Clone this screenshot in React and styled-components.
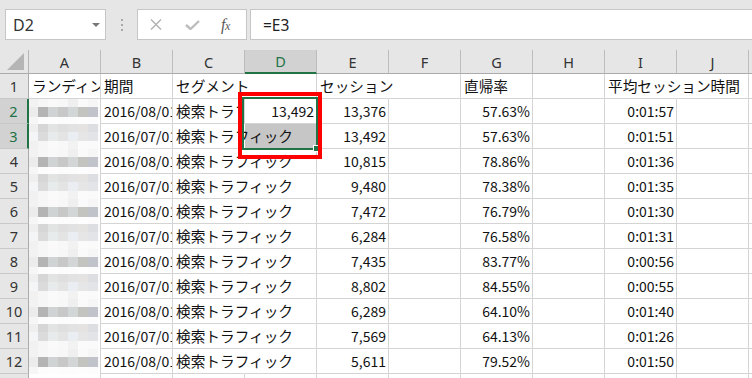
import React from 'react';
import styled, { createGlobalStyle } from 'styled-components';

const GlobalStyle = createGlobalStyle`
  html, body { margin: 0; padding: 0; background: #ffffff; }
  body { overflow: hidden; }
`;

const UI = '"Noto Sans", "Open Sans", "Liberation Sans", sans-serif';
const JP = '"Noto Sans CJK JP", "Noto Sans", sans-serif';
const GREEN = '#217346';
const COLS = '29px repeat(11, 72px)';

const Window = styled.div`
  width: 752px;
  height: 378px;
  overflow: hidden;
  background: #ffffff;
  font-family: ${JP};
`;

const FormulaBar = styled.div`
  height: 50px;
  box-sizing: border-box;
  background: #e6e6e6;
  display: flex;
  align-items: flex-start;
  padding: 9px 0 0 5px;
`;

const NameBox = styled.div`
  width: 101px;
  height: 31px;
  box-sizing: border-box;
  background: #ffffff;
  border: 1px solid #c6c6c6;
  display: flex;
  align-items: center;
  justify-content: space-between;
  padding: 0 5px 0 7px;
  font-family: ${UI};
  font-size: 16px;
  color: #333333;
`;

const Caret = styled.span`
  width: 0;
  height: 0;
  border-left: 4px solid transparent;
  border-right: 4px solid transparent;
  border-top: 4px solid #787878;
`;

const Grip = styled.div`
  display: flex;
  flex-direction: column;
  gap: 3px;
  margin: 10px 14px 0 15px;
`;

const Dot = styled.span`
  width: 2px;
  height: 2px;
  background: #a8a8a8;
`;

const FxBox = styled.div`
  width: 110px;
  height: 31px;
  box-sizing: border-box;
  background: #ffffff;
  border: 1px solid #c6c6c6;
  display: flex;
  align-items: center;
  padding-left: 12px;
`;

const IconSlot = styled.span`
  display: flex;
  align-items: center;
  margin-right: ${p => p.$gap}px;
`;

const Fx = styled.span`
  font-family: "Liberation Serif", "DejaVu Serif", serif;
  font-style: italic;
  font-size: 16px;
  color: #5a5a5a;
  letter-spacing: -0.5px;
  small { font-size: 12px; }
`;

const FormulaInput = styled.div`
  flex: 1;
  height: 31px;
  box-sizing: border-box;
  margin-left: 3px;
  background: #ffffff;
  border: 1px solid #c6c6c6;
  border-right: none;
  display: flex;
  align-items: center;
  padding-left: 12px;
  font-family: ${UI};
  font-size: 15.5px;
  color: #222222;
`;

const Sheet = styled.div`
  position: relative;
`;

const Row = styled.div`
  display: grid;
  grid-template-columns: ${COLS};
  height: ${p => (p.$header ? 24 : 25)}px;
`;

const Corner = styled.div`
  box-sizing: border-box;
  background: #e6e6e6;
  border-right: 1px solid #b4b4b4;
  border-bottom: 1px solid #ababab;
  display: flex;
  justify-content: flex-end;
  align-items: flex-end;
  padding: 0 4px 3px 0;
`;

const CornerMark = styled.span`
  width: 0;
  height: 0;
  border-left: 17px solid transparent;
  border-bottom: 17px solid #b5b5b5;
`;

const ColHead = styled.div`
  box-sizing: border-box;
  background: ${p => (p.$sel ? '#d2d2d2' : '#e6e6e6')};
  border-right: 1px solid #bcbcbc;
  border-bottom: ${p => (p.$sel ? `2px solid ${GREEN}` : '1px solid #ababab')};
  display: flex;
  align-items: center;
  justify-content: center;
  font-family: ${UI};
  font-size: 14.5px;
  color: ${p => (p.$sel ? GREEN : '#333333')};
`;

const RowHead = styled.div`
  box-sizing: border-box;
  background: ${p => (p.$sel ? '#d2d2d2' : '#e6e6e6')};
  border-right: ${p => (p.$sel ? `2px solid ${GREEN}` : '1px solid #ababab')};
  border-bottom: 1px solid #c8c8c8;
  display: flex;
  align-items: center;
  justify-content: center;
  font-family: ${UI};
  font-size: 14.5px;
  color: ${p => (p.$sel ? GREEN : '#333333')};
`;

const Cell = styled.div`
  box-sizing: border-box;
  min-width: 0;
  height: 25px;
  border-right: 1px solid ${p => (p.$spill ? 'transparent' : '#d4d4d4')};
  border-bottom: 1px solid #d4d4d4;
  background: ${p => p.$bg || '#ffffff'};
  padding: 0 2px 0 3px;
  line-height: 24px;
  white-space: nowrap;
  overflow: ${p => (p.$spill ? 'visible' : 'hidden')};
  z-index: ${p => (p.$spill ? 1 : 'auto')};
  text-align: ${p => (p.$right ? 'right' : 'left')};
  font-size: ${p => (p.$jp ? '14.67px' : '14px')};
  color: #111111;
`;

const ImageCell = styled.div`
  box-sizing: border-box;
  height: 25px;
  border-right: 1px solid #d4d4d4;
  overflow: hidden;
`;

const Mosaic = styled.div`
  display: grid;
  grid-template-columns: 9px repeat(6, 10px) 1fr;
  grid-template-rows: ${p => p.$rows};
  height: 25px;
`;

const Tile = styled.span`
  background: ${p => p.$c};
`;

const Selection = styled.div`
  position: absolute;
  left: 242px;
  top: 47px;
  width: 76px;
  height: 53px;
  box-sizing: border-box;
  border: 2px solid ${GREEN};
  pointer-events: none;
  z-index: 3;
`;

const FillHandle = styled.span`
  position: absolute;
  right: -4px;
  bottom: -4px;
  width: 5px;
  height: 5px;
  background: ${GREEN};
  border: 1px solid #ffffff;
`;

const Highlight = styled.div`
  position: absolute;
  left: 238px;
  top: 42px;
  width: 84px;
  height: 67px;
  box-sizing: border-box;
  border: 4px solid #ff0000;
  pointer-events: none;
  z-index: 4;
`;

const EVEN = {
  rows: '8px 10px 7px',
  tiles: [
    ['#f2f2f2', '#f6f6f6', '#f9f9f9', '#f7f7f7', '#efefef', '#fafafa', '#f6f6f6', '#fdfdfd'],
    ['#ececec', '#b4b4b4', '#d0d3d3', '#c8c8c8', '#d3d6d6', '#c3c3c0', '#c0c3c9', '#fafafa'],
    ['#f6f6f6', '#fcfcfc', '#fdfdfd', '#fcfcfc', '#fcfcfc', '#fdfdfd', '#fcfcfc', '#ffffff'],
  ],
};
const ODD = {
  rows: '8px 9px 8px',
  tiles: [
    ['#efefef', '#d6d6d6', '#e2e4e4', '#e0dfdf', '#e2e2e2', '#e5e3e1', '#dcdee2', '#fafafa'],
    ['#f3f5f7', '#dcdbdb', '#e8ebeb', '#e5e4e4', '#eaedf1', '#e7e6e6', '#e2e4e8', '#fcfcfc'],
    ['#f1f1f1', '#f6f6f6', '#fafafa', '#f8f8f8', '#f2f2f2', '#fbfbfb', '#fafafa', '#fefefe'],
  ],
};

const LETTERS = ['A', 'B', 'C', 'D', 'E', 'F', 'G', 'H', 'I', 'J', 'K'];

const DATA = [
  ['08', '13,492', '13,376', '57.63%', '0:01:57'],
  ['07', '', '13,492', '57.63%', '0:01:51'],
  ['08', '', '10,815', '78.86%', '0:01:36'],
  ['07', '', '9,480', '78.38%', '0:01:35'],
  ['08', '', '7,472', '76.79%', '0:01:30'],
  ['07', '', '6,284', '76.58%', '0:01:31'],
  ['08', '', '7,435', '83.77%', '0:00:56'],
  ['07', '', '8,802', '84.55%', '0:00:55'],
  ['08', '', '6,289', '64.10%', '0:01:40'],
  ['07', '', '7,569', '64.13%', '0:01:26'],
  ['08', '', '5,611', '79.52%', '0:01:50'],
];

function Blur({ even }) {
  const m = even ? EVEN : ODD;
  return (
    <Mosaic $rows={m.rows}>
      {m.tiles.flat().map((c, i) => (
        <Tile key={i} $c={c} />
      ))}
    </Mosaic>
  );
}

function CancelIcon() {
  return (
    <svg width="12" height="11" viewBox="0 0 12 11">
      <path d="M1 0.5 L11 10.5 M11 0.5 L1 10.5" stroke="#b0b0b0" strokeWidth="1.3" fill="none" />
    </svg>
  );
}

function CheckIcon() {
  return (
    <svg width="15" height="10" viewBox="0 0 15 10">
      <path d="M1 5 L5.5 9 L14 1" stroke="#bdbdbd" strokeWidth="2.4" fill="none" />
    </svg>
  );
}

export default function App() {
  return (
    <Window>
      <GlobalStyle />
      <FormulaBar>
        <NameBox>
          <span>D2</span>
          <Caret />
        </NameBox>
        <Grip>
          <Dot />
          <Dot />
          <Dot />
        </Grip>
        <FxBox>
          <IconSlot $gap={23}>
            <CancelIcon />
          </IconSlot>
          <IconSlot $gap={21}>
            <CheckIcon />
          </IconSlot>
          <Fx>
            f<small>x</small>
          </Fx>
        </FxBox>
        <FormulaInput>=E3</FormulaInput>
      </FormulaBar>

      <Sheet>
        <Row $header>
          <Corner>
            <CornerMark />
          </Corner>
          {LETTERS.map(l => (
            <ColHead key={l} $sel={l === 'D'}>
              {l}
            </ColHead>
          ))}
        </Row>

        <Row>
          <RowHead>1</RowHead>
          <Cell $jp>ランディングページ</Cell>
          <Cell $jp>期間</Cell>
          <Cell $jp $spill>セグメント</Cell>
          <Cell />
          <Cell $jp $spill>セッション</Cell>
          <Cell />
          <Cell $jp>直帰率</Cell>
          <Cell />
          <Cell $jp $spill>平均セッション時間</Cell>
          <Cell />
          <Cell />
        </Row>

        {DATA.map(([m, d, e, g, t], idx) => {
          const n = idx + 2;
          return (
            <Row key={n}>
              <RowHead $sel={n === 2 || n === 3}>{n}</RowHead>
              <ImageCell>
                <Blur even={m === '08'} />
              </ImageCell>
              <Cell>{`2016/${m}/01 - 2016/${m}/31`}</Cell>
              <Cell $jp $spill={!d}>検索トラフィック</Cell>
              <Cell $right $bg={n === 3 ? '#c6c6c6' : undefined}>{d}</Cell>
              <Cell $right>{e}</Cell>
              <Cell />
              <Cell $right>{g}</Cell>
              <Cell />
              <Cell $right>{t}</Cell>
              <Cell />
              <Cell />
            </Row>
          );
        })}

        <Row>
          <RowHead>13</RowHead>
          {LETTERS.map(l => (
            <Cell key={l} />
          ))}
        </Row>

        <Selection>
          <FillHandle />
        </Selection>
        <Highlight />
      </Sheet>
    </Window>
  );
}
